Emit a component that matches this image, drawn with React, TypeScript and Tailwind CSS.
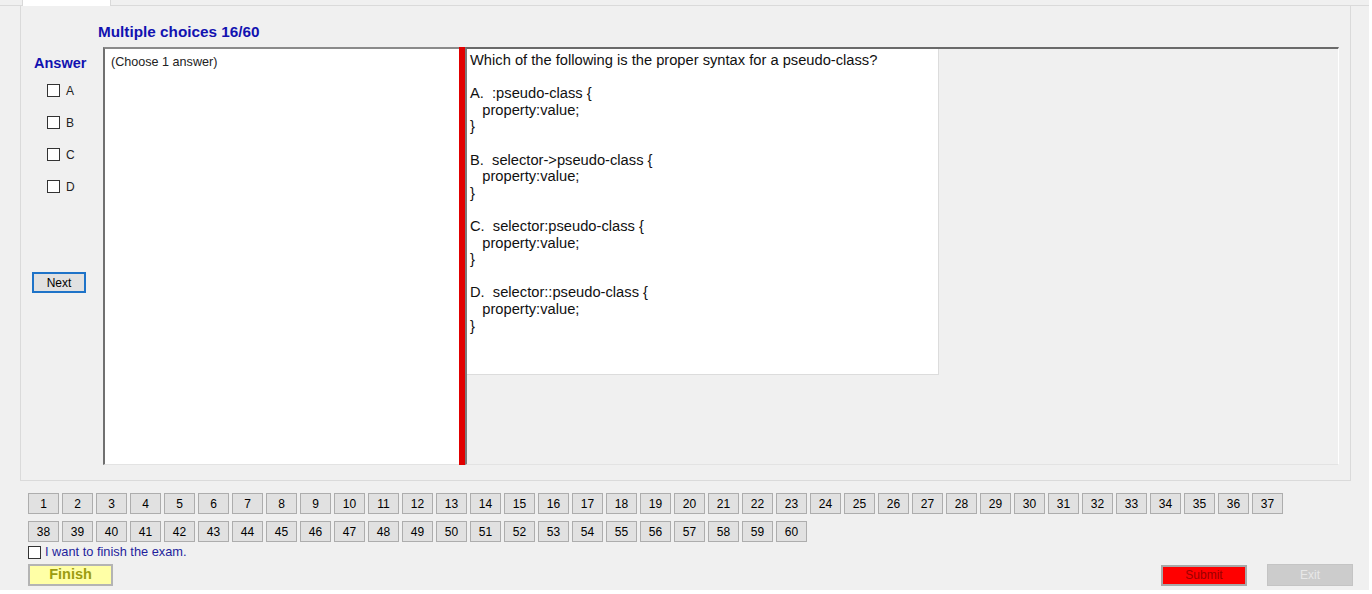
import React from "react"

const font = { fontFamily: '"Liberation Sans", Arial, sans-serif' }

const rowOne = Array.from({ length: 37 }, (_, i) => i + 1)
const rowTwo = Array.from({ length: 23 }, (_, i) => i + 38)

function Box() {
  return <span className="block w-[13px] h-[13px] border border-[#333333] bg-white" />
}

function NumButton({ n }: { n: number }) {
  return (
    <div className="w-[31px] h-[21px] flex items-center justify-center bg-[#e1e1e1] border border-[#adadad] text-[12px] text-black">
      {n}
    </div>
  )
}

export default function App() {
  return (
    <div className="w-[1372px] h-[594px] bg-white" style={font}>
      <div className="w-[1369px] h-[590px] bg-[#f0f0f0] flex flex-col">
        {/* tab header */}
        <div className="h-[6px] pl-[22px] border-b border-[#dadada]">
          <div className="w-[89px] h-[6px] bg-white border-x border-[#d9d9d9]" />
        </div>

        {/* tab page */}
        <div className="ml-[20px] w-[1331px] h-[475px] border-x border-b border-[#dadada] bg-[#f0f0f0] flex flex-col">
          <div className="pl-[77px] pt-[17px] h-[41px] text-[15.3px] leading-[18px] font-bold text-[#1212b0]">
            Multiple choices 16/60
          </div>

          <div className="flex h-[418px]">
            {/* answer column */}
            <div className="w-[82px] flex flex-col">
              <div className="pl-[13px] pt-[8px] text-[14.5px] leading-[17px] font-bold text-[#1212b0]">Answer</div>
              <div className="flex flex-col gap-[19px] pl-[26px] mt-[12px]">
                {["A", "B", "C", "D"].map((l) => (
                  <div key={l} className="flex items-center gap-[6px] h-[13px] text-[12px] text-[#222]">
                    <Box />
                    <span>{l}</span>
                  </div>
                ))}
              </div>
              <div className="ml-[11px] mt-[79px] w-[54px] h-[21px] flex items-center justify-center border-2 border-[#1e73c8] bg-[#e1e1e1] text-[12px] text-black">
                Next
              </div>
            </div>

            {/* answer text box */}
            <div className="w-[356px] h-full bg-white border-l-2 border-t-2 border-l-[#707070] border-t-[#8a8a8a] border-b border-b-[#e3e3e3] pl-[6px] pt-[6px] text-[12.6px] leading-[15px] text-[#222]">
              (Choose 1 answer)
            </div>

            {/* splitter */}
            <div className="w-[6px] h-full bg-[#e00000]" />

            {/* question panel */}
            <div className="w-[874px] h-full border-l-2 border-t-2 border-l-[#7a7a7a] border-t-[#6a6a6a] border-r border-r-white border-b border-b-[#e3e3e3] bg-[#f0f0f0]">
              <div className="w-[472px] h-[326px] bg-white border-r border-b border-[#dcdcdc] pl-[3px] pt-[3px] text-[14.7px] leading-[16.6px] text-[#111] whitespace-pre">
                {`Which of the following is the proper syntax for a pseudo-class?

A.  :pseudo-class {
   property:value;
}

B.  selector->pseudo-class {
   property:value;
}

C.  selector:pseudo-class {
   property:value;
}

D.  selector::pseudo-class {
   property:value;
}`}
              </div>
            </div>
          </div>
        </div>

        {/* question number buttons */}
        <div className="pl-[28px] pt-[12px] flex flex-col gap-[7px]">
          <div className="flex gap-[3px]">
            {rowOne.map((n) => (
              <NumButton key={n} n={n} />
            ))}
          </div>
          <div className="flex gap-[3px]">
            {rowTwo.map((n) => (
              <NumButton key={n} n={n} />
            ))}
          </div>
        </div>

        <div className="pl-[28px] mt-[3px] flex items-center gap-[4px] h-[14px] text-[12.8px] text-[#1e1e9c]">
          <Box />
          <span>I want to finish the exam.</span>
        </div>

        <div className="pl-[28px] pr-[16px] mt-[5px] flex items-center justify-between">
          <div className="w-[85px] h-[22px] flex items-center justify-center bg-[#ffffa6] border-2 border-[#b4b4b4] text-[14.5px] font-bold text-[#9c9c10]">
            Finish
          </div>
          <div className="flex items-center gap-[20px]">
            <div className="w-[86px] h-[21px] flex items-center justify-center bg-[#ff0000] border-2 border-[#a8a8a8] text-[12px] text-[#9a0000]">
              Submit
            </div>
            <div className="w-[86px] h-[22px] flex items-center justify-center bg-[#cccccc] border border-[#c4c4c4] text-[12px] text-[#e8e8e8]">
              Exit
            </div>
          </div>
        </div>
      </div>
    </div>
  )
}
